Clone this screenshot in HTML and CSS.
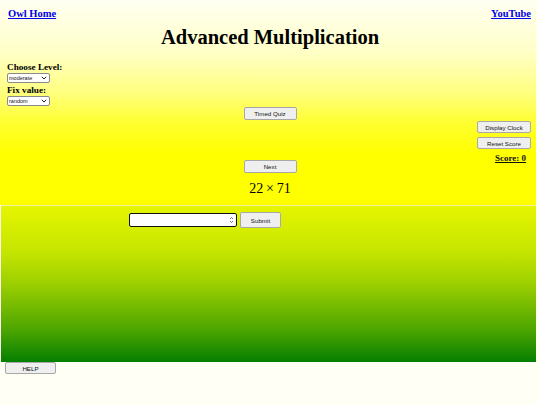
FILE: index.html
```html
<!DOCTYPE html>
<html>
<head>
<meta charset="utf-8">
<link rel="stylesheet" href="styles.css">
</head>
<body>
<div class="top">
  <div class="nav">
    <a href="#" class="link">Owl Home</a>
    <a href="#" class="link">YouTube</a>
  </div>
  <h1 class="title">Advanced Multiplication</h1>
  <div class="controls">
    <div class="label">Choose Level:</div>
    <div class="selbox">
      <select class="sel"><option>moderate</option></select>
      <svg class="chev" width="6" height="4" viewBox="0 0 6 4"><path d="M0.8 0.8 L3 3 L5.2 0.8" fill="none" stroke="#222" stroke-width="1"/></svg>
    </div>
    <div class="label second">Fix value:</div>
    <div class="selbox">
      <select class="sel"><option>random</option></select>
      <svg class="chev" width="6" height="4" viewBox="0 0 6 4"><path d="M0.8 0.8 L3 3 L5.2 0.8" fill="none" stroke="#222" stroke-width="1"/></svg>
    </div>
  </div>
  <div class="grid">
    <div></div>
    <div class="center">
      <button class="btn wide">Timed Quiz</button>
      <button class="btn wide next">Next</button>
      <div class="problem">22&#8201;×&#8201;71</div>
    </div>
    <div class="right">
      <button class="btn side">Display Clock</button>
      <button class="btn side">Reset Score</button>
      <a href="#" class="score">Score: 0</a>
    </div>
  </div>
</div>
<div class="bottom">
  <div class="answer">
    <div class="numbox">
      <input class="num" type="text">
      <svg class="spin" width="5" height="8" viewBox="0 0 5 8"><path d="M1 3 L2.5 1.5 L4 3 M1 5 L2.5 6.5 L4 5" fill="none" stroke="#555" stroke-width="0.8"/></svg>
    </div>
    <button class="btn submit">Submit</button>
  </div>
</div>
<button class="btn help">HELP</button>
</body>
</html>
```
FILE: styles.css
```css
html, body {
  margin: 0;
  padding: 0;
}
body {
  background: #fffff6;
  width: 540px;
  height: 405px;
  overflow: hidden;
  font-family: "Liberation Serif", serif;
}
.top {
  width: 536px;
  height: 205px;
  box-sizing: border-box;
  padding: 0 0 0 4px;
  background: linear-gradient(#fffff2 0%, #ffffc8 25%, #ffff80 45%, #ffff30 60%, #ffff00 75%, #ffff00 100%);
}
.nav {
  display: flex;
  justify-content: space-between;
  padding: 8px 5px 0 4px;
}
.link {
  color: #0000ee;
  font-weight: bold;
  font-size: 10.5px;
}
.title {
  margin: 5px 0 0;
  text-align: center;
  font-size: 20.5px;
  line-height: 26px;
}
.controls {
  padding: 13px 0 0 3px;
  display: flex;
  flex-direction: column;
  align-items: flex-start;
}
.label {
  font-weight: bold;
  font-size: 9.2px;
  line-height: 9px;
}
.second {
  margin-top: 2px;
}
.selbox {
  display: flex;
  align-items: center;
  width: 43px;
  height: 10px;
  box-sizing: border-box;
  margin: 1px 0;
  border: 1px solid #8a8a8a;
  border-radius: 2px;
  background: #fff;
}
.sel {
  appearance: none;
  -webkit-appearance: none;
  flex: 1;
  min-width: 0;
  border: none;
  outline: none;
  background: transparent;
  font-size: 5.5px;
  height: 8px;
  line-height: 8px;
  padding: 0 0 0 1px;
  margin: 0;
  color: #111;
  font-family: "Liberation Sans", sans-serif;
}
.chev {
  margin-right: 2px;
}
.grid {
  display: grid;
  grid-template-columns: 1fr auto 1fr;
}
.center {
  display: flex;
  flex-direction: column;
  align-items: center;
}
.btn {
  font-family: "Liberation Sans", sans-serif;
  font-size: 6.2px;
  background: #efefef;
  border: 1px solid #a8a8a8;
  border-radius: 2px;
  padding: 0;
  color: #111;
}
.wide {
  width: 53px;
  height: 13px;
}
.next {
  margin-top: 40px;
}
.problem {
  margin-top: 9px;
  font-family: "Liberation Serif", serif;
  font-size: 14px;
  line-height: 14px;
}
.right {
  display: flex;
  flex-direction: column;
  align-items: flex-end;
  padding-top: 14px;
  padding-right: 5px;
}
.side {
  width: 54px;
  height: 12px;
  margin-bottom: 4px;
}
.score {
  color: #111;
  font-weight: bold;
  font-size: 9px;
  margin-right: 5px;
}
.bottom {
  width: 535px;
  margin-left: 1px;
  height: 156px;
  border-top: 1px solid #eef3a8;
  background: linear-gradient(#e6f500 0%, #c4e500 30%, #9ccf00 50%, #4aa400 80%, #047f00 100%);
}
.answer {
  display: flex;
  align-items: center;
  gap: 3px;
  padding: 6px 0 0 128px;
}
.numbox {
  display: flex;
  align-items: center;
  width: 108px;
  height: 14px;
  box-sizing: border-box;
  border: 1.5px solid #111;
  border-radius: 2px;
  background: #fff;
}
.num {
  flex: 1;
  min-width: 0;
  border: none;
  outline: none;
  background: transparent;
  height: 10px;
  padding: 0 2px;
}
.spin {
  margin-right: 2px;
}
.submit {
  width: 41px;
  height: 16px;
}
.help {
  display: block;
  margin-left: 5px;
  width: 51px;
  height: 12px;
}
```
